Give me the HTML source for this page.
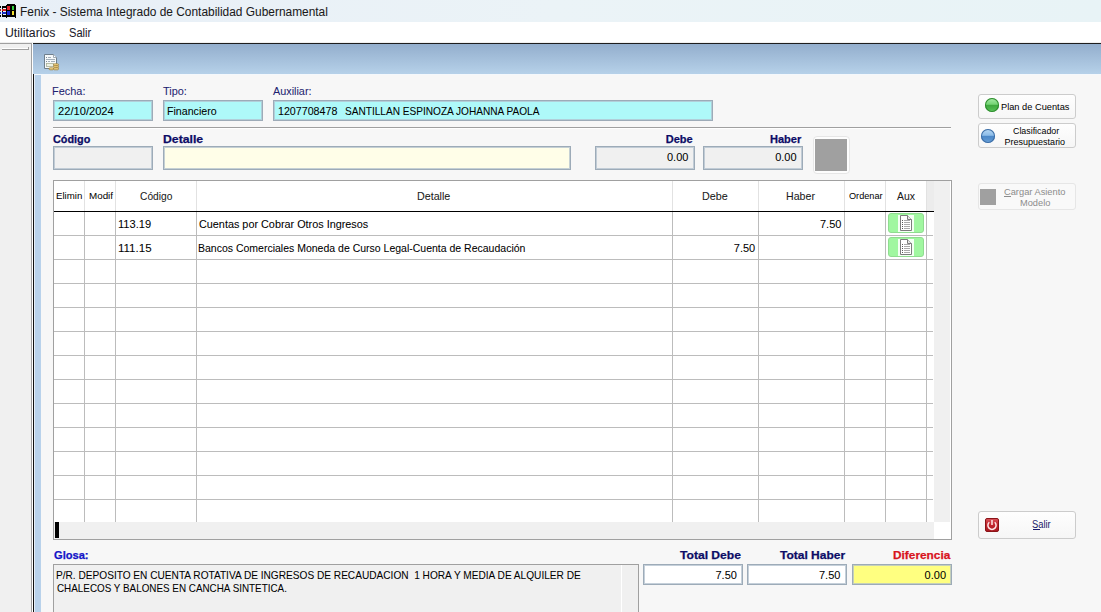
<!DOCTYPE html>
<html><head><meta charset="utf-8"><title>Fenix</title>
<style>
html,body{margin:0;padding:0;}
body{width:1101px;height:612px;overflow:hidden;position:relative;background:#f7f7f7;font-family:"Liberation Sans",sans-serif;}
.a{position:absolute;box-sizing:border-box;}
.t{position:absolute;white-space:pre;transform-origin:0 0;-webkit-text-stroke:0.05px currentColor;font-family:"Liberation Sans",sans-serif;}
.tb{position:absolute;box-sizing:border-box;border:1px solid #9dabb8;box-shadow:inset 0 0 0 1px rgba(178,192,206,0.75);}
.btn{position:absolute;box-sizing:border-box;border:1px solid #cccccc;border-radius:3px;background:linear-gradient(#fefefe,#f6f6f6);}
.hl{position:absolute;height:1px;background:#bcbcbc;}
.vl{position:absolute;width:1px;background:#bcbcbc;}
</style></head><body>
<!-- title bar -->
<div class="a" style="left:0;top:0;width:1101px;height:22px;background:linear-gradient(90deg,#e8eff7 0%,#ebf3f7 50%,#e8f3f6 100%);"></div>
<!-- app icon -->
<svg class="a" style="left:0;top:0" width="18" height="22" viewBox="0 0 18 22" shape-rendering="crispEdges">
<path d="M7 4 H15 V5 H16 V18 H15 V17 H7 V18 H6 V5 H7 Z" fill="#000"/>
<rect x="7" y="6" width="3" height="4" fill="#e0202a"/>
<rect x="12" y="6" width="2" height="4" fill="#30d040"/>
<rect x="7" y="11" width="3" height="4" fill="#1828d8"/>
<rect x="12" y="11" width="2" height="4" fill="#f0e030"/>
<rect x="2" y="6" width="4" height="2" fill="#000"/>
<rect x="0" y="6" width="1" height="2" fill="#000"/>
<rect x="2" y="9" width="4" height="2" fill="#d82020"/>
<rect x="0" y="9" width="1" height="2" fill="#a02020"/>
<rect x="2" y="12" width="4" height="2" fill="#1830c8"/>
<rect x="0" y="12" width="1" height="2" fill="#2030b0"/>
<rect x="2" y="15" width="4" height="2" fill="#000"/>
<rect x="0" y="15" width="1" height="2" fill="#000"/>
<rect x="2" y="8" width="1" height="1" fill="#000"/><rect x="2" y="11" width="1" height="1" fill="#000"/><rect x="2" y="14" width="1" height="1" fill="#000"/>
</svg>
<!-- menu bar -->
<div class="a" style="left:0;top:22px;width:1101px;height:20px;background:#ffffff;"></div>
<div class="a" style="left:0;top:42px;width:1101px;height:1px;background:#efefef;"></div>
<!-- left panel -->
<div class="a" style="left:0;top:43px;width:32px;height:569px;background:#f0f0f0;border-top:1px solid #a0a0a0;border-right:1px solid #a0a0a0;"></div>
<div class="a" style="left:2px;top:48px;width:27px;height:1px;background:#ffffff;"></div>
<div class="a" style="left:2px;top:49px;width:27px;height:1px;background:#a0a0a0;"></div>
<div class="a" style="left:28px;top:47px;width:1px;height:3px;background:#a0a0a0;"></div>
<div class="a" style="left:32px;top:43px;width:1px;height:569px;background:#ffffff;"></div>
<!-- MDI child -->
<div class="a" style="left:33px;top:43px;width:1068px;height:1px;background:#1e1e1e;"></div>
<div class="a" style="left:33px;top:44px;width:1068px;height:30px;background:linear-gradient(#93aecd,#b6d1e9);"></div>
<div class="a" style="left:33px;top:74px;width:1px;height:538px;background:#101010;"></div>
<div class="a" style="left:34px;top:74px;width:7px;height:538px;background:#b9d2eb;border-left:1px solid #e6eef6;"></div>
<div class="a" style="left:41px;top:74px;width:1060px;height:538px;background:#f7f7f7;"></div>
<div class="a" style="left:34px;top:74px;width:1067px;height:1px;background:#f4f8fc;"></div>
<!-- header icon -->
<svg class="a" style="left:43px;top:53px" width="17" height="18" viewBox="0 0 17 18">
<path d="M1.5 1.5 H10.5 L13.5 4.5 V15.5 H1.5 Z" fill="#f6f9fa" stroke="#6f7f8c" stroke-width="1"/>
<path d="M10.5 1.5 V4.5 H13.5" fill="#ffffff" stroke="#8a98a4" stroke-width="0.8"/>
<rect x="3" y="4" width="1" height="1" fill="#7e8c98"/><rect x="5" y="4" width="3" height="1" fill="#a4b0ba"/>
<rect x="3" y="6" width="9" height="1" fill="#a4b0ba"/>
<rect x="3" y="8" width="1" height="1" fill="#7e8c98"/><rect x="5" y="8" width="2" height="1" fill="#a4b0ba"/><rect x="8" y="8" width="4" height="1" fill="#a4b0ba"/>
<rect x="3.5" y="10.5" width="7" height="3" fill="#eef2e4" stroke="#a8b098" stroke-width="0.8"/>
<g fill="#f2d68a" stroke="#9c7a2c" stroke-width="0.7">
<rect x="10.5" y="10.8" width="5" height="2" rx="1"/>
<rect x="10.5" y="12.8" width="5" height="2" rx="1"/>
<rect x="10.5" y="14.8" width="5" height="2" rx="1"/>
<rect x="6" y="14.8" width="4.5" height="2" rx="1"/>
</g>
</svg>
<!-- top row boxes -->
<div class="tb" style="left:53px;top:100px;width:100px;height:21px;background:#aef9f9;"></div>
<div class="tb" style="left:163px;top:100px;width:100px;height:21px;background:#aef9f9;"></div>
<div class="tb" style="left:273px;top:100px;width:440px;height:21px;background:#aef9f9;"></div>
<div class="a" style="left:53px;top:127px;width:898px;height:1px;background:#a0a0a0;"></div>
<div class="a" style="left:53px;top:128px;width:898px;height:1px;background:#ffffff;"></div>
<!-- second row boxes -->
<div class="tb" style="left:53px;top:146px;width:100px;height:24px;background:#f0f0f0;"></div>
<div class="tb" style="left:163px;top:146px;width:408px;height:24px;background:#fffee8;"></div>
<div class="tb" style="left:595px;top:146px;width:100px;height:24px;background:#f0f0f0;"></div>
<div class="tb" style="left:703px;top:146px;width:100px;height:24px;background:#f0f0f0;"></div>
<div class="a" style="left:813px;top:136px;width:37px;height:38px;border:1px solid #e6e6e6;border-radius:4px;background:#fdfdfd;"></div>
<div class="a" style="left:815px;top:139px;width:32px;height:32px;background:#a0a0a0;"></div>

<!-- right buttons -->
<div class="btn" style="left:978px;top:94px;width:98px;height:25px;"></div>
<div class="a" style="left:985px;top:98px;width:14px;height:14px;border-radius:50%;background:linear-gradient(#a8eca8 0%,#74d474 45%,#3ea83e 52%,#4cb84c 80%,#6cd06c 100%);box-shadow:inset 0 0 0 1px #2e8a2e;"></div>
<div class="btn" style="left:978px;top:123px;width:98px;height:25px;"></div>
<div class="a" style="left:981px;top:129px;width:14px;height:14px;border-radius:50%;background:linear-gradient(#b8d8f4 0%,#8cbce8 45%,#4c88c8 52%,#5a94d0 80%,#78aee0 100%);box-shadow:inset 0 0 0 1px #3c6ca4;"></div>
<div class="btn" style="left:978px;top:183px;width:98px;height:27px;border-color:#e6e6e6;background:#f9f9f9;"></div>
<div class="a" style="left:980px;top:189px;width:16px;height:16px;background:#a0a0a0;"></div>
<div class="a" style="left:1004px;top:196px;width:7px;height:1px;background:#8c8c8c;"></div>
<div class="btn" style="left:978px;top:511px;width:98px;height:28px;"></div>
<svg class="a" style="left:985px;top:518px" width="14" height="14" viewBox="0 0 14 14">
<defs><linearGradient id="rg" x1="0" y1="0" x2="0" y2="1"><stop offset="0" stop-color="#d8545c"/><stop offset="0.45" stop-color="#c42830"/><stop offset="1" stop-color="#a81820"/></linearGradient></defs>
<rect x="0.5" y="0.5" width="13" height="13" rx="1.5" fill="url(#rg)" stroke="#8a1418" stroke-width="1"/>
<path d="M4.3 4.2 A4.1 4.1 0 1 0 9.7 4.2" fill="none" stroke="#ffe8e8" stroke-width="1.5"/>
<rect x="6.25" y="2" width="1.5" height="5" fill="#ffe8e8"/>
</svg>
<div class="a" style="left:1033px;top:529px;width:7px;height:1px;background:#1a1a6a;"></div>

<!-- grid -->
<div class="a" style="left:53px;top:180px;width:899px;height:360px;border:1px solid #a0a0a0;background:#f0f0f0;"></div>
<div class="a" style="left:54px;top:181px;width:880px;height:341px;background:#ffffff;"></div>
<div class="a" style="left:927px;top:181px;width:7px;height:30px;background:#ececec;"></div>
<div class="a" style="left:54px;top:211px;width:880px;height:1px;background:#000;"></div>
<!-- header col lines -->
<div class="vl" style="left:84px;top:181px;height:30px;background:#e2e2e2"></div>
<div class="vl" style="left:115px;top:181px;height:30px;background:#e2e2e2"></div>
<div class="vl" style="left:196px;top:181px;height:30px;background:#e2e2e2"></div>
<div class="vl" style="left:672px;top:181px;height:30px;background:#e2e2e2"></div>
<div class="vl" style="left:758px;top:181px;height:30px;background:#e2e2e2"></div>
<div class="vl" style="left:844px;top:181px;height:30px;background:#e2e2e2"></div>
<div class="vl" style="left:885px;top:181px;height:30px;background:#e2e2e2"></div>
<div class="vl" style="left:926px;top:181px;height:30px;background:#e2e2e2"></div>
<!-- body col lines -->
<div class="vl" style="left:84px;top:212px;height:310px;"></div>
<div class="vl" style="left:115px;top:212px;height:310px;"></div>
<div class="vl" style="left:196px;top:212px;height:310px;"></div>
<div class="vl" style="left:672px;top:212px;height:310px;"></div>
<div class="vl" style="left:758px;top:212px;height:310px;"></div>
<div class="vl" style="left:844px;top:212px;height:310px;"></div>
<div class="vl" style="left:885px;top:212px;height:310px;"></div>
<div class="vl" style="left:926px;top:212px;height:310px;"></div>
<!-- row lines -->
<div class="hl" style="left:54px;top:235px;width:879px;"></div>
<div class="hl" style="left:54px;top:259px;width:879px;"></div>
<div class="hl" style="left:54px;top:283px;width:879px;"></div>
<div class="hl" style="left:54px;top:307px;width:879px;"></div>
<div class="hl" style="left:54px;top:331px;width:879px;"></div>
<div class="hl" style="left:54px;top:355px;width:879px;"></div>
<div class="hl" style="left:54px;top:379px;width:879px;"></div>
<div class="hl" style="left:54px;top:403px;width:879px;"></div>
<div class="hl" style="left:54px;top:427px;width:879px;"></div>
<div class="hl" style="left:54px;top:451px;width:879px;"></div>
<div class="hl" style="left:54px;top:475px;width:879px;"></div>
<div class="hl" style="left:54px;top:499px;width:879px;"></div>
<!-- scrollbars -->
<div class="a" style="left:934px;top:181px;width:17px;height:341px;background:#f0f0f0;"></div>
<div class="a" style="left:54px;top:522px;width:880px;height:17px;background:#f0f0f0;"></div>
<div class="a" style="left:934px;top:522px;width:17px;height:17px;background:#ffffff;"></div>
<div class="a" style="left:950px;top:181px;width:1px;height:358px;background:#ffffff;"></div>
<div class="a" style="left:55px;top:522px;width:4px;height:16px;background:#000;"></div>
<!-- aux buttons -->
<div class="a" style="left:888px;top:213px;width:36px;height:20px;border-radius:3px;background:#a0f7a0;border:1px solid #90dc90;"></div>
<div class="a" style="left:888px;top:237px;width:36px;height:20px;border-radius:3px;background:#a0f7a0;border:1px solid #90dc90;"></div>
<svg class="a" style="left:898px;top:215px" width="16" height="17" viewBox="0 0 16 17">
<rect x="0" y="0" width="16" height="17" fill="#f4fff4"/>
<path d="M2.5 0.5 H9.5 L13.5 4.5 V15.5 H2.5 Z" fill="#fff" stroke="#7c7c7c" stroke-width="1"/>
<path d="M9.5 0.5 V4.5 H13.5" fill="#e8e8e8" stroke="#7c7c7c" stroke-width="1"/>
<g fill="#5a5a5a"><rect x="4" y="5" width="1" height="1"/><rect x="4" y="7" width="1" height="1"/><rect x="4" y="9" width="1" height="1"/><rect x="4" y="11" width="1" height="1"/><rect x="4" y="13" width="1" height="1"/></g>
<g fill="#aaaaaa"><rect x="6" y="5" width="6" height="1"/><rect x="6" y="7" width="6" height="1"/><rect x="6" y="9" width="6" height="1"/><rect x="6" y="11" width="6" height="1"/><rect x="6" y="13" width="6" height="1"/></g>
</svg>
<svg class="a" style="left:898px;top:239px" width="16" height="17" viewBox="0 0 16 17">
<rect x="0" y="0" width="16" height="17" fill="#f4fff4"/>
<path d="M2.5 0.5 H9.5 L13.5 4.5 V15.5 H2.5 Z" fill="#fff" stroke="#7c7c7c" stroke-width="1"/>
<path d="M9.5 0.5 V4.5 H13.5" fill="#e8e8e8" stroke="#7c7c7c" stroke-width="1"/>
<g fill="#5a5a5a"><rect x="4" y="5" width="1" height="1"/><rect x="4" y="7" width="1" height="1"/><rect x="4" y="9" width="1" height="1"/><rect x="4" y="11" width="1" height="1"/><rect x="4" y="13" width="1" height="1"/></g>
<g fill="#aaaaaa"><rect x="6" y="5" width="6" height="1"/><rect x="6" y="7" width="6" height="1"/><rect x="6" y="9" width="6" height="1"/><rect x="6" y="11" width="6" height="1"/><rect x="6" y="13" width="6" height="1"/></g>
</svg>

<!-- glosa -->
<div class="a" style="left:53px;top:564px;width:586px;height:60px;border:1px solid #a0a0a0;background:#f0f0f0;"></div>
<div class="a" style="left:621px;top:565px;width:1px;height:50px;background:#ffffff;"></div>
<!-- totals -->
<div class="tb" style="left:643px;top:564px;width:100px;height:21px;background:#ffffff;"></div>
<div class="tb" style="left:747px;top:564px;width:100px;height:21px;background:#ffffff;"></div>
<div class="tb" style="left:852px;top:564px;width:100px;height:21px;background:#ffff80;"></div>

<div class='t' style='left:20.31px;top:6px;font-size:12px;line-height:12px;color:#1a1a1a;transform:scaleX(0.9926);'>Fenix - Sistema Integrado de Contabilidad Gubernamental</div>
<div class='t' style='left:4.88px;top:27px;font-size:12px;line-height:12px;color:#1a1a2a;transform:scaleX(1.0229);'>Utilitarios</div>
<div class='t' style='left:68.57px;top:27px;font-size:12px;line-height:12px;color:#1a1a2a;transform:scaleX(0.9261);'>Salir</div>
<div class='t' style='left:52.01px;top:86px;font-size:11px;line-height:11px;color:#1f1f70;transform:scaleX(0.9938);'>Fecha:</div>
<div class='t' style='left:163.40px;top:86px;font-size:11px;line-height:11px;color:#1f1f70;transform:scaleX(0.9913);'>Tipo:</div>
<div class='t' style='left:273.00px;top:86px;font-size:11px;line-height:11px;color:#1f1f70;transform:scaleX(0.9842);'>Auxiliar:</div>
<div class='t' style='left:58.00px;top:106px;font-size:11px;line-height:11px;color:#000000;transform:scaleX(1.0127);'>22/10/2024</div>
<div class='t' style='left:166.83px;top:106px;font-size:11px;line-height:11px;color:#000000;transform:scaleX(0.966);'>Financiero</div>
<div class='t' style='left:278.23px;top:106px;font-size:11px;line-height:11px;color:#000000;transform:scaleX(0.97);'>1207708478</div>
<div class='t' style='left:345.38px;top:106px;font-size:11px;line-height:11px;color:#000000;transform:scaleX(0.9175);'>SANTILLAN ESPINOZA JOHANNA PAOLA</div>
<div class='t' style='left:53.20px;top:134px;font-size:11px;line-height:11px;color:#0c0c66;font-weight:bold;-webkit-text-stroke:0.25px currentColor;transform:scaleX(0.9868);'>Código</div>
<div class='t' style='left:162.69px;top:134px;font-size:11px;line-height:11px;color:#0c0c66;font-weight:bold;-webkit-text-stroke:0.25px currentColor;transform:scaleX(1.1114);'>Detalle</div>
<div class='t' style='left:665.80px;top:134px;font-size:11px;line-height:11px;color:#0c0c66;font-weight:bold;-webkit-text-stroke:0.25px currentColor;'>Debe</div>
<div class='t' style='left:770.00px;top:134px;font-size:11px;line-height:11px;color:#0c0c66;font-weight:bold;-webkit-text-stroke:0.25px currentColor;'>Haber</div>
<div class='t' style='left:667.00px;top:152px;font-size:11px;line-height:11px;color:#000000;'>0.00</div>
<div class='t' style='left:775.20px;top:152px;font-size:11px;line-height:11px;color:#000000;'>0.00</div>
<div class='t' style='left:1000.83px;top:102px;font-size:9.5px;line-height:9.5px;color:#000000;transform:scaleX(0.9739);-webkit-text-stroke:0;'>Plan de Cuentas</div>
<div class='t' style='left:1012.50px;top:127px;font-size:9px;line-height:9px;color:#000000;transform:scaleX(0.983);-webkit-text-stroke:0;'>Clasificador</div>
<div class='t' style='left:1004.60px;top:138px;font-size:9px;line-height:9px;color:#000000;-webkit-text-stroke:0;'>Presupuestario</div>
<div class='t' style='left:1004.30px;top:187px;font-size:9.5px;line-height:9.5px;color:#8c8c8c;transform:scaleX(0.9778);-webkit-text-stroke:0;'>Cargar Asiento</div>
<div class='t' style='left:1019.73px;top:198px;font-size:9.5px;line-height:9.5px;color:#8c8c8c;transform:scaleX(0.9733);-webkit-text-stroke:0;'>Modelo</div>
<div class='t' style='left:1032.26px;top:520px;font-size:10px;line-height:10px;color:#1a1a6a;transform:scaleX(0.9368);-webkit-text-stroke:0;'>Salir</div>
<div class='t' style='left:56.23px;top:192px;font-size:9px;line-height:9px;color:#000000;transform:scaleX(1.0739);-webkit-text-stroke:0;'>Elimin</div>
<div class='t' style='left:88.51px;top:192px;font-size:9px;line-height:9px;color:#000000;transform:scaleX(1.0905);-webkit-text-stroke:0;'>Modif</div>
<div class='t' style='left:139.50px;top:191px;font-size:11px;line-height:11px;color:#1a1a1a;transform:scaleX(0.9286);'>Código</div>
<div class='t' style='left:416.83px;top:191px;font-size:11px;line-height:11px;color:#1a1a1a;transform:scaleX(0.9727);'>Detalle</div>
<div class='t' style='left:701.52px;top:191px;font-size:11px;line-height:11px;color:#1a1a1a;transform:scaleX(0.976);'>Debe</div>
<div class='t' style='left:785.63px;top:191px;font-size:11px;line-height:11px;color:#1a1a1a;transform:scaleX(0.9655);'>Haber</div>
<div class='t' style='left:848.50px;top:192px;font-size:9px;line-height:9px;color:#000000;transform:scaleX(1.0152);-webkit-text-stroke:0;'>Ordenar</div>
<div class='t' style='left:897.00px;top:191px;font-size:11px;line-height:11px;color:#1a1a1a;transform:scaleX(0.9474);'>Aux</div>
<div class='t' style='left:117.99px;top:219px;font-size:11px;line-height:11px;color:#000000;transform:scaleX(1.0094);'>113.19</div>
<div class='t' style='left:198.60px;top:219px;font-size:11px;line-height:11px;color:#000000;transform:scaleX(0.9849);'>Cuentas por Cobrar Otros Ingresos</div>
<div class='t' style='left:820.00px;top:219px;font-size:11px;line-height:11px;color:#000000;'>7.50</div>
<div class='t' style='left:117.85px;top:243px;font-size:11px;line-height:11px;color:#000000;transform:scaleX(1.0484);'>111.15</div>
<div class='t' style='left:197.65px;top:243px;font-size:11px;line-height:11px;color:#000000;transform:scaleX(0.9544);'>Bancos Comerciales Moneda de Curso Legal-Cuenta de Recaudación</div>
<div class='t' style='left:733.80px;top:243px;font-size:11px;line-height:11px;color:#000000;'>7.50</div>
<div class='t' style='left:53.50px;top:550px;font-size:11px;line-height:11px;color:#1414c8;font-weight:bold;-webkit-text-stroke:0.25px currentColor;transform:scaleX(1.0091);'>Glosa:</div>
<div class='t' style='left:56.48px;top:570px;font-size:11px;line-height:11px;color:#000000;transform:scaleX(0.9195);'>P/R. DEPOSITO EN CUENTA ROTATIVA DE INGRESOS DE RECAUDACION  1 HORA Y MEDIA DE ALQUILER DE</div>
<div class='t' style='left:57.40px;top:583px;font-size:11px;line-height:11px;color:#000000;transform:scaleX(0.8969);'>CHALECOS Y BALONES EN CANCHA SINTETICA.</div>
<div class='t' style='left:680.30px;top:550px;font-size:11px;line-height:11px;color:#0c0c66;font-weight:bold;-webkit-text-stroke:0.25px currentColor;transform:scaleX(1.1);'>Total Debe</div>
<div class='t' style='left:779.60px;top:550px;font-size:11px;line-height:11px;color:#0c0c66;font-weight:bold;-webkit-text-stroke:0.25px currentColor;transform:scaleX(1.09);'>Total Haber</div>
<div class='t' style='left:892.52px;top:550px;font-size:11px;line-height:11px;color:#d8141e;font-weight:bold;-webkit-text-stroke:0.25px currentColor;transform:scaleX(1.0769);'>Diferencia</div>
<div class='t' style='left:715.50px;top:570px;font-size:11px;line-height:11px;color:#000000;'>7.50</div>
<div class='t' style='left:819.00px;top:570px;font-size:11px;line-height:11px;color:#000000;'>7.50</div>
<div class='t' style='left:924.60px;top:570px;font-size:11px;line-height:11px;color:#000000;'>0.00</div>
</body></html>
